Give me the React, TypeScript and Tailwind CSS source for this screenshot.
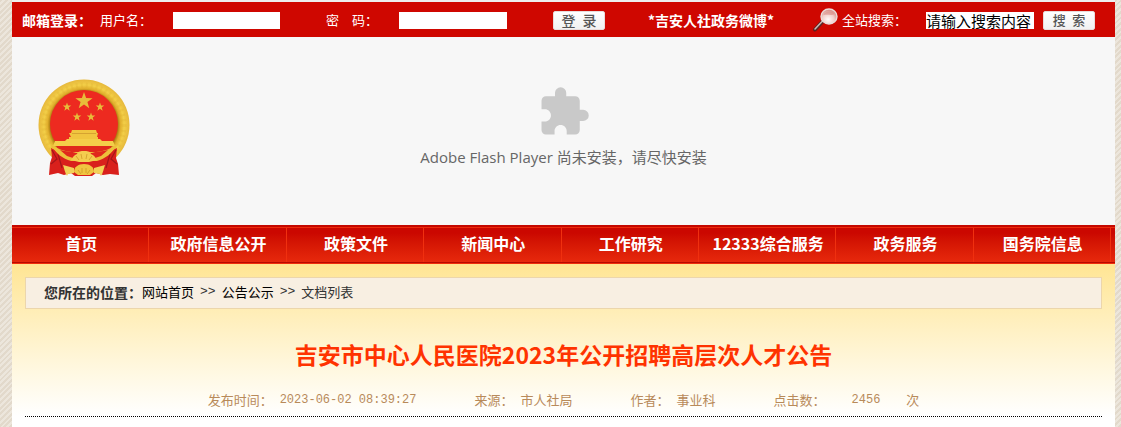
import { MdExtension } from "react-icons/md";

const NAV_LINKS = [
  "首页",
  "政府信息公开",
  "政策文件",
  "新闻中心",
  "工作研究",
  "12333综合服务",
  "政务服务",
  "国务院信息",
];

const STAR = "0,-1 0.235,-0.324 0.951,-0.309 0.38,0.124 0.588,0.809 0,0.4 -0.588,0.809 -0.38,0.124 -0.951,-0.309 -0.235,-0.324";

const STARS = [
  { x: 46, y: 22, r: 9 },
  { x: 29, y: 28, r: 4.5 },
  { x: 39, y: 38, r: 4.5 },
  { x: 53, y: 38, r: 4.5 },
  { x: 62, y: 28, r: 4.5 },
];

function Emblem() {
  return (
    <svg width="92" height="98" viewBox="0 0 92 98" role="img" aria-label="国徽">
      <defs>
        <radialGradient id="ring" cx="0.5" cy="0.5" r="0.5">
          <stop offset="0.74" stopColor="#a9780f" />
          <stop offset="0.8" stopColor="#e0ae2c" />
          <stop offset="0.88" stopColor="#f3cf48" />
          <stop offset="1" stopColor="#e6b83c" />
        </radialGradient>
      </defs>
      <circle cx="46" cy="46" r="45.5" fill="url(#ring)" />
      <circle cx="46" cy="46" r="40" fill="none" stroke="#d9a52a" strokeWidth="5" strokeDasharray="2 3" opacity="0.2" />
      <circle cx="46" cy="45" r="34" fill="#ed2a20" />
      {STARS.map((s) => (
        <polygon key={`${s.x}-${s.y}`} points={STAR} fill="#e8bc3a" transform={`translate(${s.x} ${s.y}) scale(${s.r})`} />
      ))}
      {/* Gate tower */}
      <path d="M34 51h24l1 3h1l-1 4h1v3H31v-3h2l-2-4h2z" fill="#f0c53f" />
      <path d="M34 54.500h24" stroke="#cf9a2c" strokeWidth="0.8" />
      <path d="M29 60h33l2 2h11l2 5H15l2-5h10z" fill="#f4ce49" />
      <path d="M18 67h56l-4 6H22z" fill="#e0281c" />
      {/* Ribbons */}
      <path d="M13 69l10 5 23 8 23-8 10-5-1 10 2 6 1 11-9-1-7 1-7-2-4 3H37l-4-3-7 2-6-2-9 2 1-12 2-6z" fill="#d9201c" />
      <path d="M14 71l5 9-6 5M78 71l-5 9 6 5M20 75l4 14M72 75l-4 14" stroke="#a3161a" strokeWidth="1.2" fill="none" />
      <path d="M13 65c8 6 15 8 24 8h18c9 0 16-2 24-8-4 9-12 15-20 17H33c-8-2-16-8-20-17z" fill="#edc03b" />
      <path d="M22 71c6 2 12 1 16 3h16c4-2 10-1 16-3l-7 6-9 3H38l-9-3z" fill="#e0281c" />
      {/* Flower and horns */}
      <path d="M33 81c2-3 3-5 6-6 1-3 4-3 7-3s6 0 7 3c3 1 4 3 6 6l-8 2H41z" fill="#f4cd4f" />
      <path d="M41 81l-3-4M44 80l-1-5M48 80l1-5M51 81l3-4" stroke="#d09a28" strokeWidth="0.8" />
      <path d="M36 93c0-5 4-8 10-8s10 3 10 8l-4 3H40z" fill="#f0c540" />
      <path d="M40 91l3 4M44 89v5M48 89v5M52 91l-3 4" stroke="#cf9726" strokeWidth="0.8" />
      <path d="M25 86l11 3v5l-6 1-1 2c-2-3-3-8-4-11zM67 86l-11 3v5l6 1 1 2c2-3 3-8 4-11z" fill="#f2d158" />
    </svg>
  );
}

function Magnifier() {
  return (
    <svg width="25" height="24" viewBox="0 0 25 24" aria-hidden="true">
      <defs>
        <radialGradient id="lens" cx="0.45" cy="0.7" r="0.75">
          <stop offset="0" stopColor="#fffafa" />
          <stop offset="0.5" stopColor="#f2cfcb" />
          <stop offset="1" stopColor="#c9766f" />
        </radialGradient>
      </defs>
      <path d="M10 13L2 21.500" stroke="#5b2522" strokeWidth="4" strokeLinecap="round" />
      <path d="M9.500 13L2 21" stroke="#cbb9b6" strokeWidth="1.500" strokeLinecap="round" />
      <ellipse cx="16" cy="8.500" rx="8" ry="7.500" fill="url(#lens)" stroke="#eaddda" strokeWidth="1.400" />
      <path d="M10.500 7c1-4 9-5 11-1-3 2-7 0-11 1z" fill="#d88e87" opacity="0.6" />
    </svg>
  );
}

function TopBar() {
  return (
    <div className="flex h-[35px] items-center bg-[#cf0700] pr-5 pl-2.5 text-[13px] whitespace-nowrap text-white">
      <form className="flex items-center" onSubmit={(e) => e.preventDefault()}>
        <strong className="mr-2 text-sm">邮箱登录：</strong>
        <label htmlFor="user">用户名：</label>
        <input id="user" type="text" className="mt-px mr-[46px] ml-[21px] h-[17px] w-[107px] bg-white px-0.5 text-black" />
        <label htmlFor="pass">密　码：</label>
        <input id="pass" type="password" className="mt-px mr-[46px] ml-[21px] h-[17px] w-[108px] bg-white px-0.5 text-black" />
        <button className="mt-px h-[19px] w-[52px] rounded-xs border border-[#e8dcdb] bg-linear-to-b from-white to-[#f1f1f1] text-sm leading-4 font-medium text-[#555]">
          登&ensp;录
        </button>
      </form>
      <a href="#weibo" className="mx-auto pl-1 text-sm font-bold">
        *吉安人社政务微博*
      </a>
      <form className="flex items-center" onSubmit={(e) => e.preventDefault()}>
        <Magnifier />
        <label htmlFor="search" className="ml-1">
          全站搜索：
        </label>
        <input
          id="search"
          type="text"
          defaultValue="请输入搜索内容"
          className="mt-px mr-[9px] ml-[19px] h-[17px] w-[108px] bg-white text-[15px] leading-4 text-black"
        />
        <button className="mt-px h-[19px] w-[52px] rounded-xs border border-[#e8dcdb] bg-linear-to-b from-white to-[#f1f1f1] text-[13px] leading-4 font-medium text-[#555]">
          搜&ensp;索
        </button>
      </form>
    </div>
  );
}

function Banner() {
  return (
    <header className="grid h-[188px] grid-cols-[1fr_auto_1fr] items-center bg-[#f7f7f7] pb-1.5">
      <div className="pl-[26px]">
        <Emblem />
      </div>
      <div className="flex flex-col items-center gap-2 pb-1">
        <MdExtension size={54} className="text-[#c9c9c9]" />
        <p className="font-['Open_Sans','Noto_Sans_CJK_SC',sans-serif] text-[15px] leading-5 text-[#666]">
          Adobe Flash Player 尚未安装，请尽快安装
        </p>
      </div>
    </header>
  );
}

function Nav() {
  return (
    <nav className="border-t-2 border-b border-t-[#c40800] border-b-[#f02c0c]">
      <div className="border-y border-t-[#ee2b0c] border-b-[#b80a00] bg-linear-to-b from-[#cb0700] from-15% to-[#e7280c] pr-1">
        <ul className="grid grid-cols-8">
          {NAV_LINKS.map((label) => (
            <li key={label} className="border-r border-[#f0300f]">
              <a href="#" className="block h-[34px] pl-0.5 text-center text-base leading-[30px] font-bold whitespace-nowrap text-white">
                {label}
              </a>
            </li>
          ))}
        </ul>
      </div>
    </nav>
  );
}

function Article() {
  return (
    <main className="grow bg-white bg-linear-to-b from-[#ffe593] to-white to-[152px] px-[13px] pt-[13px]">
      <div className="flex h-8 items-center border border-[#ecd6ac] bg-[#f8efe2] pb-0.5 pl-[18px] text-[13px] text-[#333]">
        <strong className="text-sm">您所在的位置：</strong>
        <a href="#" className="text-black">
          网站首页
        </a>
        <span className="mx-1.5 font-['Liberation_Mono',monospace]">&gt;&gt;</span>
        <a href="#" className="text-black">
          公告公示
        </a>
        <span className="mx-1.5 font-['Liberation_Mono',monospace]">&gt;&gt;</span>
        <span>文档列表</span>
      </div>
      <h1 className="pt-[29px] text-center text-[23px] leading-8 font-bold text-[#ff3300]">
        吉安市中心人民医院2023年公开招聘高层次人才公告
      </h1>
      <div className="mt-5 flex h-[27px] justify-center gap-[58px] border-b border-dotted border-black text-[13px] leading-5 text-[#b88a5a]">
        <p className="flex gap-[7px]">
          <span>发布时间：</span>
          <time className="font-['Liberation_Mono',monospace] text-xs leading-5">2023-06-02 08:39:27</time>
        </p>
        <p className="flex gap-[7px]">
          <span>来源：</span>
          <span>市人社局</span>
        </p>
        <p className="flex gap-[7px]">
          <span>作者：</span>
          <span>事业科</span>
        </p>
        <p className="flex gap-[26px]">
          <span>点击数：</span>
          <span className="font-['Liberation_Mono',monospace] text-xs leading-5">2456</span>
          <span>次</span>
        </p>
      </div>
    </main>
  );
}

export default function App() {
  return (
    <div className="flex min-h-screen flex-col bg-[repeating-linear-gradient(135deg,#e2d9cb_0px,#e2d9cb_2px,#ece6dc_2px,#ece6dc_4px)] pr-1.5 pl-3 font-['Noto_Sans_CJK_SC',sans-serif]">
      <div className="h-0.5 bg-[#eeeeee]" />
      <TopBar />
      <Banner />
      <Nav />
      <Article />
    </div>
  );
}
